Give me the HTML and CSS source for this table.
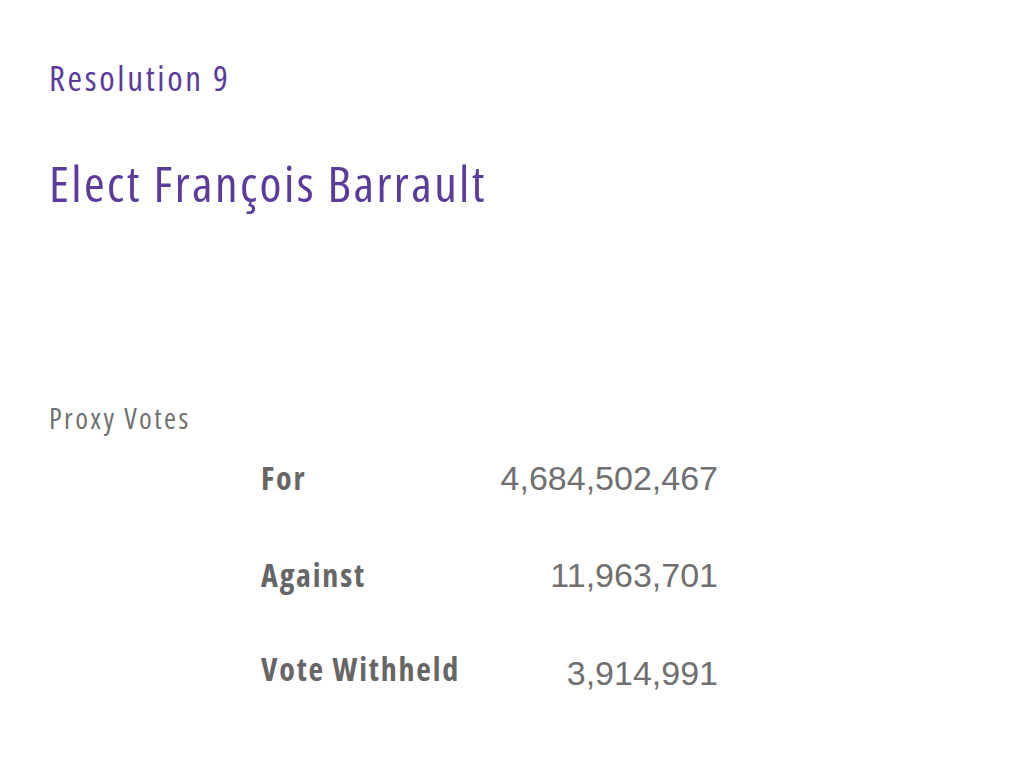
FILE: index.html
```html
<!DOCTYPE html>
<html lang="en">
<head>
<meta charset="utf-8">
<title>Resolution 9</title>
<link rel="stylesheet" href="styles.css">
</head>
<body>
<main class="slide">
  <h2 class="kicker">Resolution 9</h2>
  <h1 class="title">Elect François Barrault</h1>
  <h3 class="section">Proxy Votes</h3>
  <div class="votes">
    <div class="row row-for">
      <span class="label">For</span>
      <span class="num">4,684,502,467</span>
    </div>
    <div class="row row-against">
      <span class="label">Against</span>
      <span class="num">11,963,701</span>
    </div>
    <div class="row row-withheld">
      <span class="label">Vote Withheld</span>
      <span class="num">3,914,991</span>
    </div>
  </div>
</main>
</body>
</html>
```
FILE: styles.css
```css
html, body {
  margin: 0;
  padding: 0;
  background: #ffffff;
}

.slide {
  width: 1024px;
  height: 768px;
  box-sizing: border-box;
  padding: 60px 0 0 49px;
  font-family: "Open Sans", "Noto Sans", sans-serif;
  font-stretch: condensed;
}

.kicker {
  margin: 0;
  font-size: 35px;
  line-height: 35px;
  font-weight: 400;
  letter-spacing: 2.7px;
  color: #5b3b9b;
}

.title {
  margin: 63px 0 0;
  font-size: 50px;
  line-height: 50px;
  font-weight: 400;
  letter-spacing: 2.4px;
  color: #5b3b9b;
}

.section {
  margin: 195px 0 0;
  font-size: 29px;
  line-height: 29px;
  font-weight: 400;
  letter-spacing: 2.4px;
  color: #717171;
}

.votes {
  margin: 30px 0 0 212px;
  width: 457px;
  display: flex;
  flex-direction: column;
}

.row {
  display: flex;
  justify-content: space-between;
  align-items: flex-start;
  height: 32px;
}

.row-against { margin-top: 65px; }
.row-withheld { margin-top: 62px; }

.label {
  font-size: 32px;
  line-height: 32px;
  font-weight: 700;
  letter-spacing: 1.8px;
  color: #666666;
}

.num {
  font-family: "Liberation Sans", Arial, sans-serif;
  font-stretch: 100%;
  font-size: 34px;
  line-height: 34px;
  letter-spacing: 0;
  color: #707070;
  margin-top: -1px;
}

.row-withheld .num { margin-top: 3px; }
```
